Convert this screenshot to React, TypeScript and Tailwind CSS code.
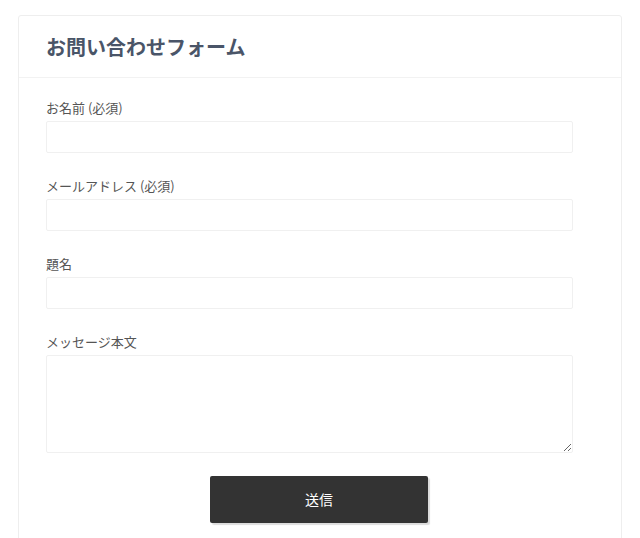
export default function App() {
  const fields = ["お名前 (必須)", "メールアドレス (必須)", "題名"];
  return (
    <div className="min-h-screen bg-white pt-[15px] px-[18px] font-['Noto_Sans_CJK_JP',sans-serif]">
      <div className="rounded-[3px] border border-[#eeeeee] bg-white pb-10">
        <div className="h-[62px] flex items-center px-[27px] border-b border-[#f2f2f2]">
          <h1 className="text-[20px] font-bold text-[#4a5568] leading-none">お問い合わせフォーム</h1>
        </div>
        <form className="px-[27px] pt-[20px]">
          {fields.map((label) => (
            <div key={label} className="mb-[23px]">
              <label className="block text-[13px] leading-[20px] text-[#555] mb-[3px]">{label}</label>
              <input className="block w-[527px] h-[32px] rounded-[2px] border border-[#f0f0f0] bg-white outline-none" />
            </div>
          ))}
          <div className="mb-[23px]">
            <label className="block text-[13px] leading-[20px] text-[#555] mb-[3px]">メッセージ本文</label>
            <textarea className="block w-[527px] h-[98px] rounded-[2px] border border-[#f0f0f0] bg-white outline-none" />
          </div>
          <div className="flex justify-center pr-[2px]">
            <button
              type="button"
              className="w-[218px] h-[47px] bg-[#333333] text-white text-[14px] rounded-[2px] shadow-[2px_2px_1px_#dcdcdc]"
            >
              送信
            </button>
          </div>
        </form>
      </div>
    </div>
  );
}
